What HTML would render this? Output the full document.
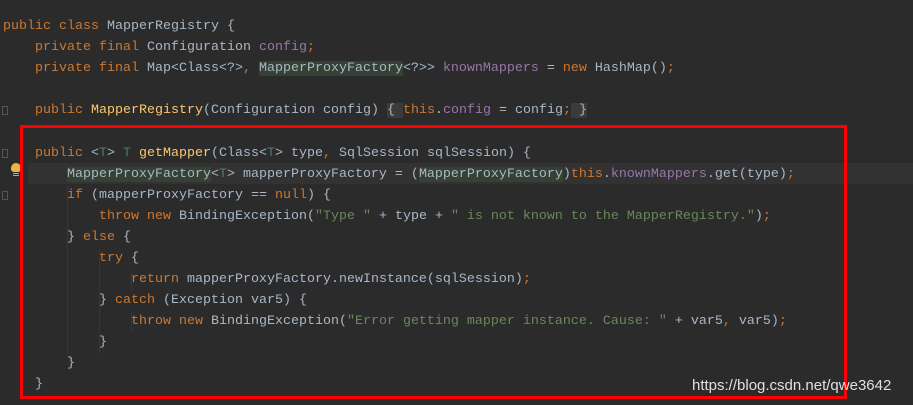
<!DOCTYPE html>
<html><head><meta charset="utf-8"><style>
html,body{margin:0;padding:0}
body{width:913px;height:405px;background:#2b2b2b;position:relative;overflow:hidden;font-family:"Liberation Mono",monospace;font-size:13.33px;color:#a9b7c6}
.l{position:absolute;left:3px;height:21px;line-height:21px;white-space:pre;margin-top:2px}
.k{color:#cc7832}.f{color:#9876aa}.m{color:#ffc66d}.s{color:#6a8759}.t{color:#507874}
.h{background:#344134}.b{background:#3b3b3b}
.cur{position:absolute;left:28px;right:0;top:163px;height:21px;background:#323232}
.box{position:absolute;left:20px;top:125px;width:821px;height:268px;border:3px solid #ff0000}
.g{position:absolute;left:2px;width:4px;height:7px;border:1px solid #555}
.ig{position:absolute;width:1px;background:#373737}
.wm{position:absolute;left:692px;top:377px;font-family:"Liberation Sans",sans-serif;font-size:15px;color:#e0e0e0}
</style></head><body>
<div class="cur"></div>
<div class="ig" style="left:67px;top:186px;height:168px"></div>
<div class="ig" style="left:99px;top:249px;height:105px"></div>
<div class="ig" style="left:131px;top:270px;height:21px"></div>
<div class="ig" style="left:131px;top:312px;height:21px"></div>
<div class="l" style="top:14px"><span class="k">public class </span>MapperRegistry {</div>
<div class="l" style="top:35px">    <span class="k">private final </span>Configuration <span class="f">config</span><span class="k">;</span></div>
<div class="l" style="top:56px">    <span class="k">private final </span>Map&lt;Class&lt;?&gt;<span class="k">, </span><span class="h">MapperProxyFactory</span>&lt;?&gt;&gt; <span class="f">knownMappers </span>= <span class="k">new </span>HashMap()<span class="k">;</span></div>
<div class="l" style="top:98px">    <span class="k">public </span><span class="m">MapperRegistry</span>(Configuration config) <span class="b">{ </span><span class="k">this</span>.<span class="f">config </span>= config<span class="k">;</span><span class="b"> }</span></div>
<div class="l" style="top:141px">    <span class="k">public </span>&lt;<span class="t">T</span>&gt; <span class="t">T </span><span class="m">getMapper</span>(Class&lt;<span class="t">T</span>&gt; type<span class="k">, </span>SqlSession sqlSession) {</div>
<div class="l" style="top:162px">        <span class="h">MapperProxyFactory</span>&lt;<span class="t">T</span>&gt; mapperProxyFactory = (<span class="h">MapperProxyFactory</span>)<span class="k">this</span>.<span class="f">knownMappers</span>.get(type)<span class="k">;</span></div>
<div class="l" style="top:183px">        <span class="k">if </span>(mapperProxyFactory == <span class="k">null</span>) {</div>
<div class="l" style="top:204px">            <span class="k">throw new </span>BindingException(<span class="s">"Type " </span>+ type + <span class="s">" is not known to the MapperRegistry."</span>)<span class="k">;</span></div>
<div class="l" style="top:225px">        } <span class="k">else </span>{</div>
<div class="l" style="top:246px">            <span class="k">try </span>{</div>
<div class="l" style="top:267px">                <span class="k">return </span>mapperProxyFactory.newInstance(sqlSession)<span class="k">;</span></div>
<div class="l" style="top:288px">            } <span class="k">catch </span>(Exception var5) {</div>
<div class="l" style="top:309px">                <span class="k">throw new </span>BindingException(<span class="s">"Error getting mapper instance. Cause: " </span>+ var5<span class="k">, </span>var5)<span class="k">;</span></div>
<div class="l" style="top:330px">            }</div>
<div class="l" style="top:351px">        }</div>
<div class="l" style="top:372px">    }</div>
<div class="g" style="top:106px"></div>
<div class="g" style="top:149px"></div>
<div class="g" style="top:191px"></div>
<div style="position:absolute;left:11px;top:163px;width:10px;height:9px;border-radius:5px 5px 3px 3px;background:#e8b642"></div>
<div style="position:absolute;left:13px;top:173px;width:6px;height:1px;background:#aaa"></div>
<div style="position:absolute;left:13px;top:175px;width:6px;height:1px;background:#aaa"></div>
<div class="box"></div>
<div class="wm">https://blog.csdn.net/qwe3642</div>
</body></html>
